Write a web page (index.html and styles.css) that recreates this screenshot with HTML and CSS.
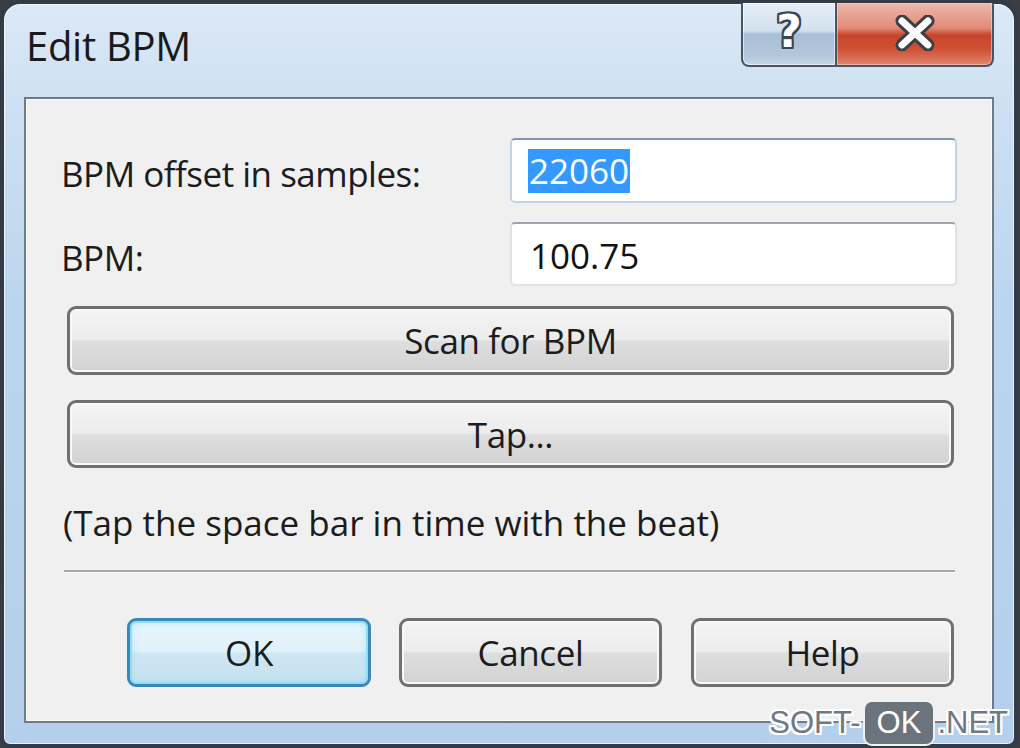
FILE: index.html
```html
<!DOCTYPE html>
<html lang="en">
<head>
<meta charset="utf-8">
<title>Edit BPM</title>
<link rel="stylesheet" href="styles.css">
</head>
<body>
<div class="window">
  <div class="titlebar">
    <div class="title">Edit BPM</div>
    <div class="caption-buttons">
      <div class="cap-btn cap-help"><span class="qmark">?</span></div>
      <div class="cap-btn cap-close">
        <svg width="44" height="36" viewBox="0 0 44 36">
          <path d="M9 6 L35 30 M35 6 L9 30" stroke="#3b3f46" stroke-width="13" stroke-linecap="round"/>
          <path d="M9 6 L35 30 M35 6 L9 30" stroke="#ffffff" stroke-width="7" stroke-linecap="round"/>
        </svg>
      </div>
    </div>
  </div>
  <div class="client">
    <div class="form-row first">
      <span class="label">BPM offset in samples:</span>
      <div class="field focused"><span class="sel">22060</span></div>
    </div>
    <div class="form-row second">
      <span class="label">BPM:</span>
      <div class="field">100.75</div>
    </div>
    <div class="btn wide scan">Scan for BPM</div>
    <div class="btn wide tap">Tap...</div>
    <p class="hint">(Tap the space bar in time with the beat)</p>
    <div class="sep"></div>
    <div class="actions">
      <div class="btn ok">OK</div>
      <div class="btn cancel">Cancel</div>
      <div class="btn help">Help</div>
    </div>
  </div>
  <div class="watermark"><span class="wm-text">SOFT-</span><span class="wm-box">OK</span><span class="wm-text">.NET</span></div>
</div>
</body>
</html>
```
FILE: styles.css
```css
* { box-sizing: border-box; }
html, body { margin: 0; padding: 0; }
body {
  width: 1020px;
  height: 748px;
  overflow: hidden;
  background: #3a3d42;
  font-family: "Open Sans", "Noto Sans", sans-serif;
  color: #1c1c1c;
}
.window {
  position: relative;
  width: 1018px;
  height: 748px;
  border: 4px solid #333c46;
  border-radius: 20px 20px 10px 10px;
  background: linear-gradient(180deg, #dce9f6 0%, #cfe1f3 12%, #bcd5ee 40%, #b4cfec 100%);
  box-shadow: inset 0 0 0 1px rgba(255,255,255,0.7);
  padding: 0 20px 21px 20px;
  display: flex;
  flex-direction: column;
}
.titlebar {
  height: 93px;
  display: flex;
  justify-content: space-between;
  align-items: flex-start;
  flex: none;
}
.title {
  font-size: 40px;
  line-height: 54px;
  margin-top: 15px;
  margin-left: 2px;
  color: #1a1a1a;
  letter-spacing: -0.3px;
}
.caption-buttons {
  display: flex;
  height: 64px;
  margin-top: -1px;
}
.cap-btn {
  height: 64px;
  border: 2px solid #4a5563;
  border-top: none;
  display: flex;
  align-items: center;
  justify-content: center;
}
.cap-help {
  width: 95px;
  border-right: 1px solid #4a5563;
  border-radius: 0 0 0 8px;
  background: linear-gradient(180deg, #e4edf6 0%, #d3e1ee 45%, #a9bfd6 50%, #b3c7dc 85%, #c6d6e6 100%);
  box-shadow: inset 0 0 0 1px rgba(255,255,255,0.55);
}
.cap-close {
  width: 158px;
  border-left: 1px solid #4a5563;
  border-radius: 0 0 8px 0;
  background: linear-gradient(180deg, #eeb7aa 0%, #e28c78 40%, #c8442b 52%, #cf5136 75%, #e2866e 100%);
  box-shadow: inset 0 0 0 1px rgba(255,220,210,0.5);
}
.qmark {
  font-family: "DejaVu Sans", sans-serif;
  font-weight: bold;
  font-size: 44px;
  line-height: 46px;
  color: #ffffff;
  text-shadow: -2px 0 #3d4650, 2px 0 #3d4650, 0 -2px #3d4650, 0 2px #3d4650,
               -2px -2px #3d4650, 2px 2px #3d4650, -2px 2px #3d4650, 2px -2px #3d4650;
  margin-top: -4px;
}
.cap-close svg { display: block; margin-top: -2px; }

.client {
  flex: 1;
  border: 2px solid #6f7a87;
  background: #f0f0f0;
  box-shadow: inset 0 0 0 1px #fbfbfb;
  padding: 39px 35px 0 38px;
  display: flex;
  flex-direction: column;
}
.form-row {
  display: flex;
  align-items: center;
  justify-content: space-between;
}
.form-row.second { margin-top: 19px; }
.label {
  font-size: 35px;
  letter-spacing: -0.5px;
  margin-top: 6px;
  margin-left: -3px;
}
.field {
  width: 447px;
  height: 65px;
  background: #ffffff;
  border: 2px solid #dfe3e9;
  border-top-color: #9ea4ad;
  border-radius: 5px;
  font-size: 35px;
  line-height: 44px;
  padding: 9px 0 0 18px;
  color: #111;
}
.second .field { height: 64px; padding-top: 10px; }
.field.focused {
  border-color: #c4d3e3;
  border-top-color: #8397ad;
}
.sel {
  display: inline-block;
  background: #3399ff;
  color: #ffffff;
  padding: 0 1px;
  height: 44px;
  margin-left: -2px;
}
.btn {
  display: flex;
  align-items: center;
  justify-content: center;
  border: 3px solid #707070;
  border-radius: 9px;
  background: linear-gradient(180deg, #f4f4f4 0%, #ececec 48%, #dedede 52%, #d2d2d2 100%);
  box-shadow: inset 0 0 0 2px #f9f9f9;
  font-size: 35px;
  letter-spacing: -0.4px;
  color: #1c1c1c;
}
.btn.wide {
  margin-left: 3px;
  margin-right: 3px;
}
.scan { margin-top: 20px; height: 69px; }
.tap { margin-top: 25px; height: 68px; }
.hint {
  margin: 31px 0 0 -1px;
  font-size: 35px;
  line-height: 48px;
  letter-spacing: 0;
}
.sep {
  margin-top: 23px;
  margin-right: 2px;
  height: 3px;
  border-top: 2px solid #a7a7a7;
  border-bottom: 1px solid #ffffff;
}
.actions {
  margin-top: 45px;
  display: flex;
  justify-content: flex-end;
  gap: 28px;
  margin-right: 3px;
}
.actions .btn { height: 69px; width: 263px; }
.actions .ok {
  width: 244px;
  border-color: #3a87b8;
  background: linear-gradient(180deg, #e9f6fc 0%, #e0f1fa 48%, #cfe6f2 52%, #c6e1ef 100%);
  box-shadow: inset 0 0 0 2px #92dcf6, inset 0 0 8px #9cdcf3;
}
.actions .cancel { margin-right: 1px; }

.watermark {
  position: absolute;
  right: 6px;
  bottom: -2px;
  display: flex;
  align-items: center;
  font-family: "Liberation Sans", Arial, sans-serif;
  font-size: 31px;
  line-height: 42px;
}
.wm-text {
  color: #6f7985;
  text-shadow: -2px 0 #fff, 2px 0 #fff, 0 -2px #fff, 0 2px #fff,
               -2px -2px #fff, 2px 2px #fff, -2px 2px #fff, 2px -2px #fff;
}
.wm-box {
  background: #6b737c;
  color: #ffffff;
  border: 2px solid #f2f2f2;
  border-radius: 9px;
  padding: 0 12px;
  height: 46px;
  line-height: 42px;
  margin: 0 2px;
}
```
